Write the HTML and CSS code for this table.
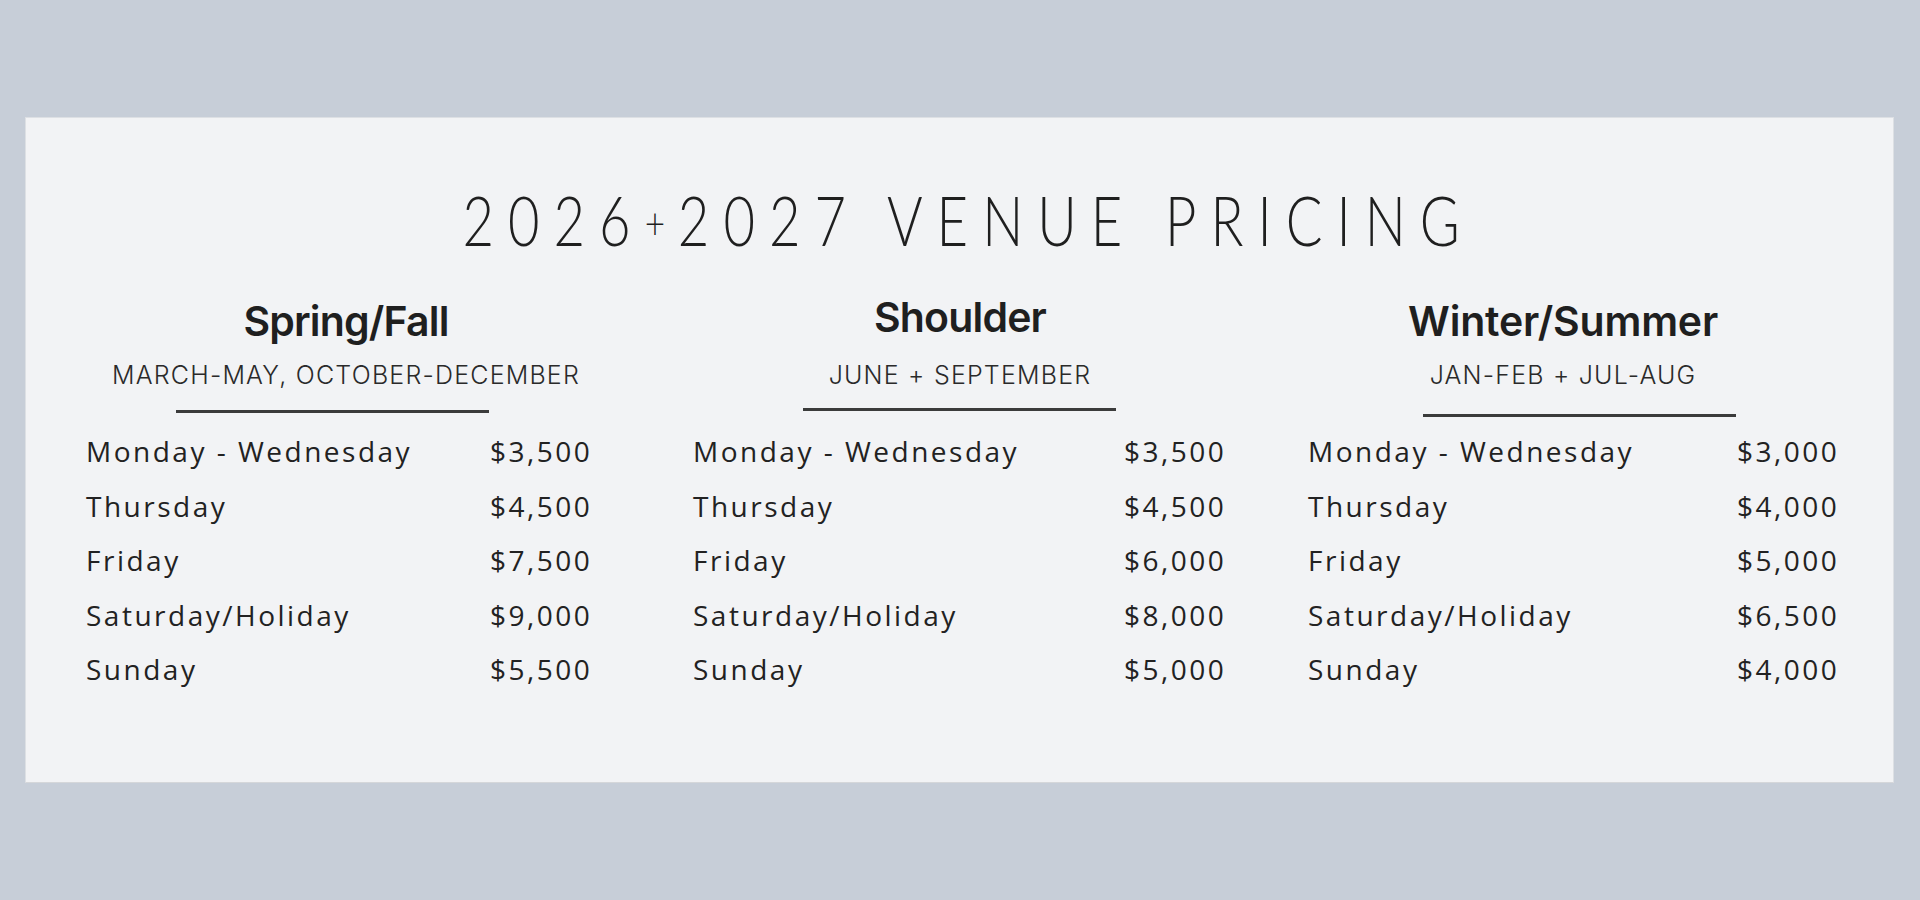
FILE: index.html
```html
<!DOCTYPE html>
<html lang="en">
<head>
<meta charset="utf-8">
<title>2026+2027 Venue Pricing</title>
<link rel="stylesheet" href="styles.css">
</head>
<body>
<main class="card">
  <h1 class="title"><span class="title__text">2026<span class="title__plus">+</span>2027 VENUE PRICING</span></h1>
  <div class="seasons">
    <section class="season season--a">
      <header class="season__head">
        <h2 class="season__name">Spring/Fall</h2>
        <p class="season__months">MARCH-MAY, OCTOBER-DECEMBER</p>
      </header>
      <div class="season__rule"></div>
      <div class="rates">
        <div class="rate"><span class="rate__day">Monday - Wednesday</span><span class="rate__price">$3,500</span></div>
        <div class="rate"><span class="rate__day">Thursday</span><span class="rate__price">$4,500</span></div>
        <div class="rate"><span class="rate__day">Friday</span><span class="rate__price">$7,500</span></div>
        <div class="rate"><span class="rate__day">Saturday/Holiday</span><span class="rate__price">$9,000</span></div>
        <div class="rate"><span class="rate__day">Sunday</span><span class="rate__price">$5,500</span></div>
      </div>
    </section>
    <section class="season season--b">
      <header class="season__head">
        <h2 class="season__name">Shoulder</h2>
        <p class="season__months">JUNE + SEPTEMBER</p>
      </header>
      <div class="season__rule"></div>
      <div class="rates">
        <div class="rate"><span class="rate__day">Monday - Wednesday</span><span class="rate__price">$3,500</span></div>
        <div class="rate"><span class="rate__day">Thursday</span><span class="rate__price">$4,500</span></div>
        <div class="rate"><span class="rate__day">Friday</span><span class="rate__price">$6,000</span></div>
        <div class="rate"><span class="rate__day">Saturday/Holiday</span><span class="rate__price">$8,000</span></div>
        <div class="rate"><span class="rate__day">Sunday</span><span class="rate__price">$5,000</span></div>
      </div>
    </section>
    <section class="season season--c">
      <header class="season__head">
        <h2 class="season__name">Winter/Summer</h2>
        <p class="season__months">JAN-FEB + JUL-AUG</p>
      </header>
      <div class="season__rule"></div>
      <div class="rates">
        <div class="rate"><span class="rate__day">Monday - Wednesday</span><span class="rate__price">$3,000</span></div>
        <div class="rate"><span class="rate__day">Thursday</span><span class="rate__price">$4,000</span></div>
        <div class="rate"><span class="rate__day">Friday</span><span class="rate__price">$5,000</span></div>
        <div class="rate"><span class="rate__day">Saturday/Holiday</span><span class="rate__price">$6,500</span></div>
        <div class="rate"><span class="rate__day">Sunday</span><span class="rate__price">$4,000</span></div>
      </div>
    </section>
  </div>
</main>
</body>
</html>
```

FILE: styles.css
```css
html, body {
  margin: 0;
  padding: 0;
}

body {
  background: #c7ced8;
  color: #222222;
  font-family: "Open Sans", sans-serif;
}

.card {
  box-sizing: border-box;
  width: 1869px;
  height: 666px;
  margin: 117px 0 0 25px;
  padding-top: 68px;
  background: #f2f3f5;
  border: 1px solid #dde0e4;
  border-bottom-color: #d5d7da;
}

.title {
  margin: 0;
  font-family: "Lato", sans-serif;
  font-weight: 300;
  font-size: 68px;
  line-height: 68px;
  text-align: center;
  color: #1f1f1f;
}

.title__text {
  display: inline-block;
  letter-spacing: 17.5px;
  margin-right: -17.5px;
  transform: scaleX(0.8);
}

.title__plus {
  font-size: 44px;
  vertical-align: 7px;
  letter-spacing: 16px;
}

.seasons {
  display: grid;
  grid-template-columns: 607px 615px 1fr;
  margin-top: 41px;
  padding-left: 60px;
}

.season {
  --head-w: 520px;
  --rule-x: 90px;
  --rule-top: 20px;
  --rule-bottom: 11px;
  --months-top: 14px;
  --name-top: 0px;
  --label-w: 404px;
}

.season--b {
  --head-w: 534px;
  --name-top: -4px;
  --months-top: 18px;
  --rule-x: 110px;
  --rule-top: 18px;
  --rule-bottom: 13px;
  --label-w: 431px;
}

.season--c {
  --head-w: 510px;
  --rule-x: 115px;
  --rule-top: 24px;
  --rule-bottom: 7px;
  --label-w: 429px;
}

.season__head {
  width: var(--head-w);
  text-align: center;
}

.season__name {
  margin: var(--name-top) 0 0;
  font-family: "Inter", sans-serif;
  font-weight: 600;
  font-size: 41px;
  line-height: 49px;
  letter-spacing: -0.02em;
  color: #1f1f1f;
}

.season--c .season__name {
  letter-spacing: -0.005em;
}

.season__months {
  margin: var(--months-top) 0 0;
  font-family: "Inter", sans-serif;
  font-weight: 300;
  font-size: 25px;
  line-height: 30px;
  letter-spacing: 1.2px;
  color: #2a2a2a;
}

.season__rule {
  width: 313px;
  height: 3px;
  background: #3b3b3b;
  margin: var(--rule-top) 0 var(--rule-bottom) var(--rule-x);
}

.rates {
  display: flex;
  flex-direction: column;
}

.rate {
  display: grid;
  grid-template-columns: var(--label-w) auto;
  font-family: "Open Sans", sans-serif;
  font-weight: 400;
  font-size: 28px;
  line-height: 54.5px;
  letter-spacing: 2.5px;
  color: #222222;
}
```
